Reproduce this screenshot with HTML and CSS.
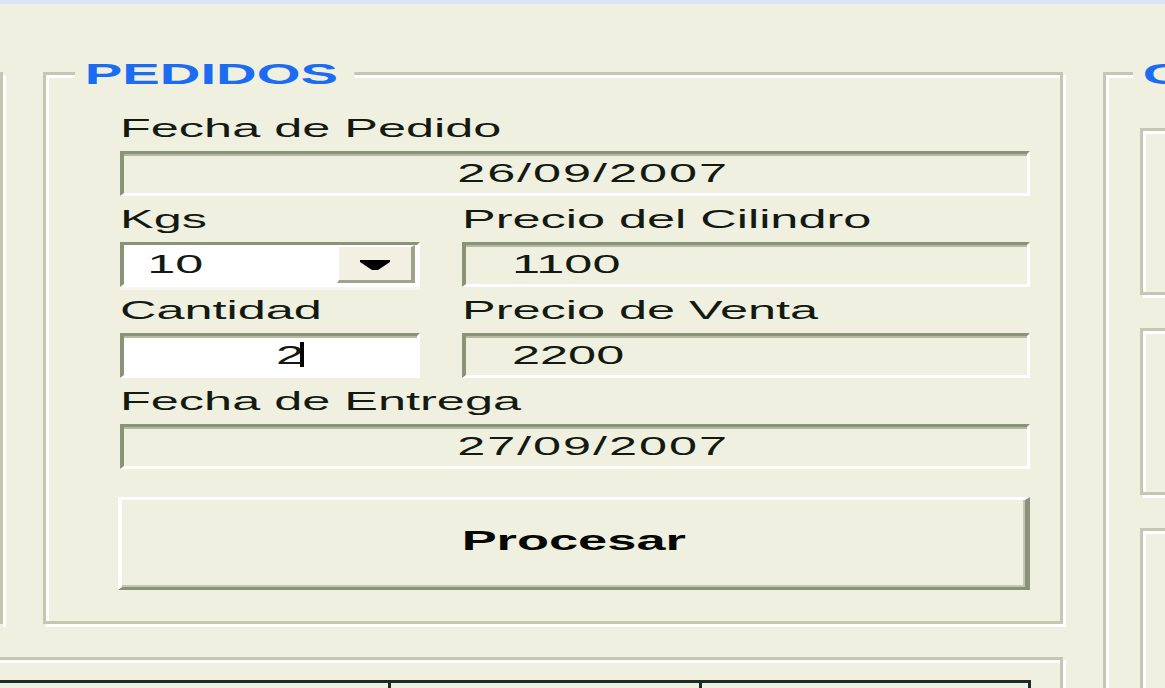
FILE: index.html
```html
<!DOCTYPE html>
<html lang="es">
<head>
<meta charset="utf-8">
<title>Pedidos</title>
<link rel="stylesheet" href="styles.css">
</head>
<body>
<div class="topbar"></div>
<div class="main">
  <div class="leftcol">
    <div class="toprow">
      <div class="group stub"></div>
      <div class="group pedidos">
        <div class="legend">PEDIDOS</div>
        <div class="form">
          <div class="label full"><span class="t">Fecha de Pedido</span></div>
          <div class="field full center"><span class="t tc date">26/09/2007</span></div>

          <div class="label"><span class="t">Kgs</span></div>
          <div class="label"><span class="t">Precio del Cilindro</span></div>
          <div class="combo">
            <span class="t combo-text">10</span>
            <div class="dropbtn">
              <svg width="32" height="10" viewBox="0 0 32 10"><path d="M1 0H31V2L19 10H13L1 2Z" fill="#000"/></svg>
            </div>
          </div>
          <div class="field num"><span class="t">1100</span></div>

          <div class="label"><span class="t">Cantidad</span></div>
          <div class="label"><span class="t">Precio de Venta</span></div>
          <div class="field input"><span class="t">2</span><span class="caret"></span></div>
          <div class="field num"><span class="t">2200</span></div>

          <div class="label full"><span class="t">Fecha de Entrega</span></div>
          <div class="field full center"><span class="t tc date">27/09/2007</span></div>

          <div class="button full"><span class="t tc">Procesar</span></div>
        </div>
      </div>
    </div>
    <div class="group bottomgroup">
      <div class="table">
        <div class="cell c1"></div>
        <div class="cell c2"></div>
        <div class="cell c3"></div>
      </div>
    </div>
  </div>
  <div class="group right">
    <div class="legend">CLIENTES</div>
    <div class="panel"></div>
    <div class="panel"></div>
    <div class="panel"></div>
  </div>
</div>
</body>
</html>
```

FILE: styles.css
```css
html, body {
  margin: 0;
  padding: 0;
}
body {
  width: 1165px;
  height: 688px;
  overflow: hidden;
  background: #f0f0e1;
  font-family: "Liberation Sans", Arial, sans-serif;
  color: #121a12;
}

.topbar {
  height: 4px;
  background: #d9e2f7;
}

.main {
  display: flex;
  align-items: flex-start;
  gap: 40px;
  padding-top: 68px;
}

.leftcol {
  width: 1063px;
  flex: 0 0 1063px;
  display: flex;
  flex-direction: column;
}

.toprow {
  display: flex;
  gap: 40px;
}

/* etched group frame */
.group {
  position: relative;
  box-sizing: border-box;
  border: 3px solid #c4c7b2;
  box-shadow: inset 3px 3px 0 #fff, 3px 3px 0 #fff;
}

.stub {
  flex: 0 0 3px;
  width: 3px;
  height: 552px;
  border-left: 0;
}

.pedidos {
  flex: 0 0 1020px;
  width: 1020px;
  height: 552px;
}

.legend {
  position: absolute;
  top: -16px;
  left: 29px;
  padding: 0 8px 0 5px;
  background: #f0f0e1;
  color: #1b6cf2;
  font-weight: bold;
  font-size: 29px;
  line-height: 30px;
  white-space: nowrap;
  transform: scaleX(1.94);
  transform-origin: 0 0;
}

.t {
  display: inline-block;
  white-space: nowrap;
  transform: scaleX(1.94);
  transform-origin: 0 50%;
}
.tc {
  transform-origin: 50% 50%;
}
.date {
  letter-spacing: 1px;
}

.form {
  display: grid;
  grid-template-columns: 300px 568px;
  column-gap: 42px;
  padding: 30px 30px 0 74px;
}
.full {
  grid-column: 1 / -1;
}

.label {
  height: 46px;
  line-height: 46px;
  font-size: 26px;
  white-space: nowrap;
}

.field {
  box-sizing: border-box;
  height: 45px;
  font-size: 26px;
  line-height: 39px;
  white-space: nowrap;
  border-top: 3px solid #8a9377;
  border-left: 4px solid #8a9377;
  border-bottom: 3px solid #fff;
  border-right: 3px solid #fff;
  box-shadow: inset 0 2px 0 #b4b9a2;
}
.field.center {
  text-align: center;
  padding-left: 36px;
}
.field.num {
  padding-left: 46px;
}
.field.input {
  background: #fff;
  padding-left: 152px;
}

.caret {
  display: inline-block;
  width: 4px;
  height: 25px;
  background: #000;
  vertical-align: -3px;
  margin-left: 10px;
}

.combo {
  box-sizing: border-box;
  height: 45px;
  display: flex;
  align-items: flex-start;
  background: #fff;
  border-top: 3px solid #8a9377;
  border-left: 4px solid #8a9377;
  border-bottom: 3px solid #fff;
  border-right: 3px solid #fff;
  box-shadow: 0 3px 0 #f7f7ef;
}
.combo-text {
  font-size: 26px;
  line-height: 39px;
  padding-left: 12px;
}
.dropbtn {
  box-sizing: border-box;
  margin-left: auto;
  margin-right: 2px;
  width: 78px;
  height: 38px;
  background: #f1f0e3;
  border-top: 2px solid #fff;
  border-left: 2px solid #fff;
  border-right: 4px solid #9ea48c;
  border-bottom: 3px solid #9ea48c;
  display: flex;
  align-items: center;
  justify-content: center;
}
.dropbtn svg {
  display: block;
  margin-top: 2px;
}

.button {
  box-sizing: border-box;
  margin-top: 28px;
  margin-left: -2px;
  height: 93px;
  border-top: 3px solid #fff;
  border-left: 4px solid #fff;
  border-bottom: 3px solid #8a937a;
  border-right: 5px solid #8a937a;
  box-shadow: inset -2px -2px 0 #c3c6b3;
  text-align: center;
  font-weight: bold;
  font-size: 27px;
  line-height: 83px;
  color: #050805;
}

.bottomgroup {
  margin-top: 33px;
  margin-left: -20px;
  width: 1083px;
  height: 200px;
  padding: 20px 29px 0 0;
}

.table {
  display: flex;
  border-top: 3px solid #1e2a24;
}
.cell {
  box-sizing: border-box;
  height: 40px;
  border-right: 3px solid #1e2a24;
}
.c1 { width: 408px; }
.c2 { width: 311px; }
.c3 { width: 329px; }

.right {
  flex: 0 0 300px;
  width: 300px;
  height: 700px;
  padding: 53px 0 0 34px;
}
.right .legend {
  left: 27px;
}

.panel {
  box-sizing: border-box;
  width: 220px;
  height: 167px;
  margin-bottom: 33px;
  border: 3px solid #c4c7b2;
  box-shadow: inset 3px 3px 0 #fff, 3px 3px 0 #fff;
}
```
